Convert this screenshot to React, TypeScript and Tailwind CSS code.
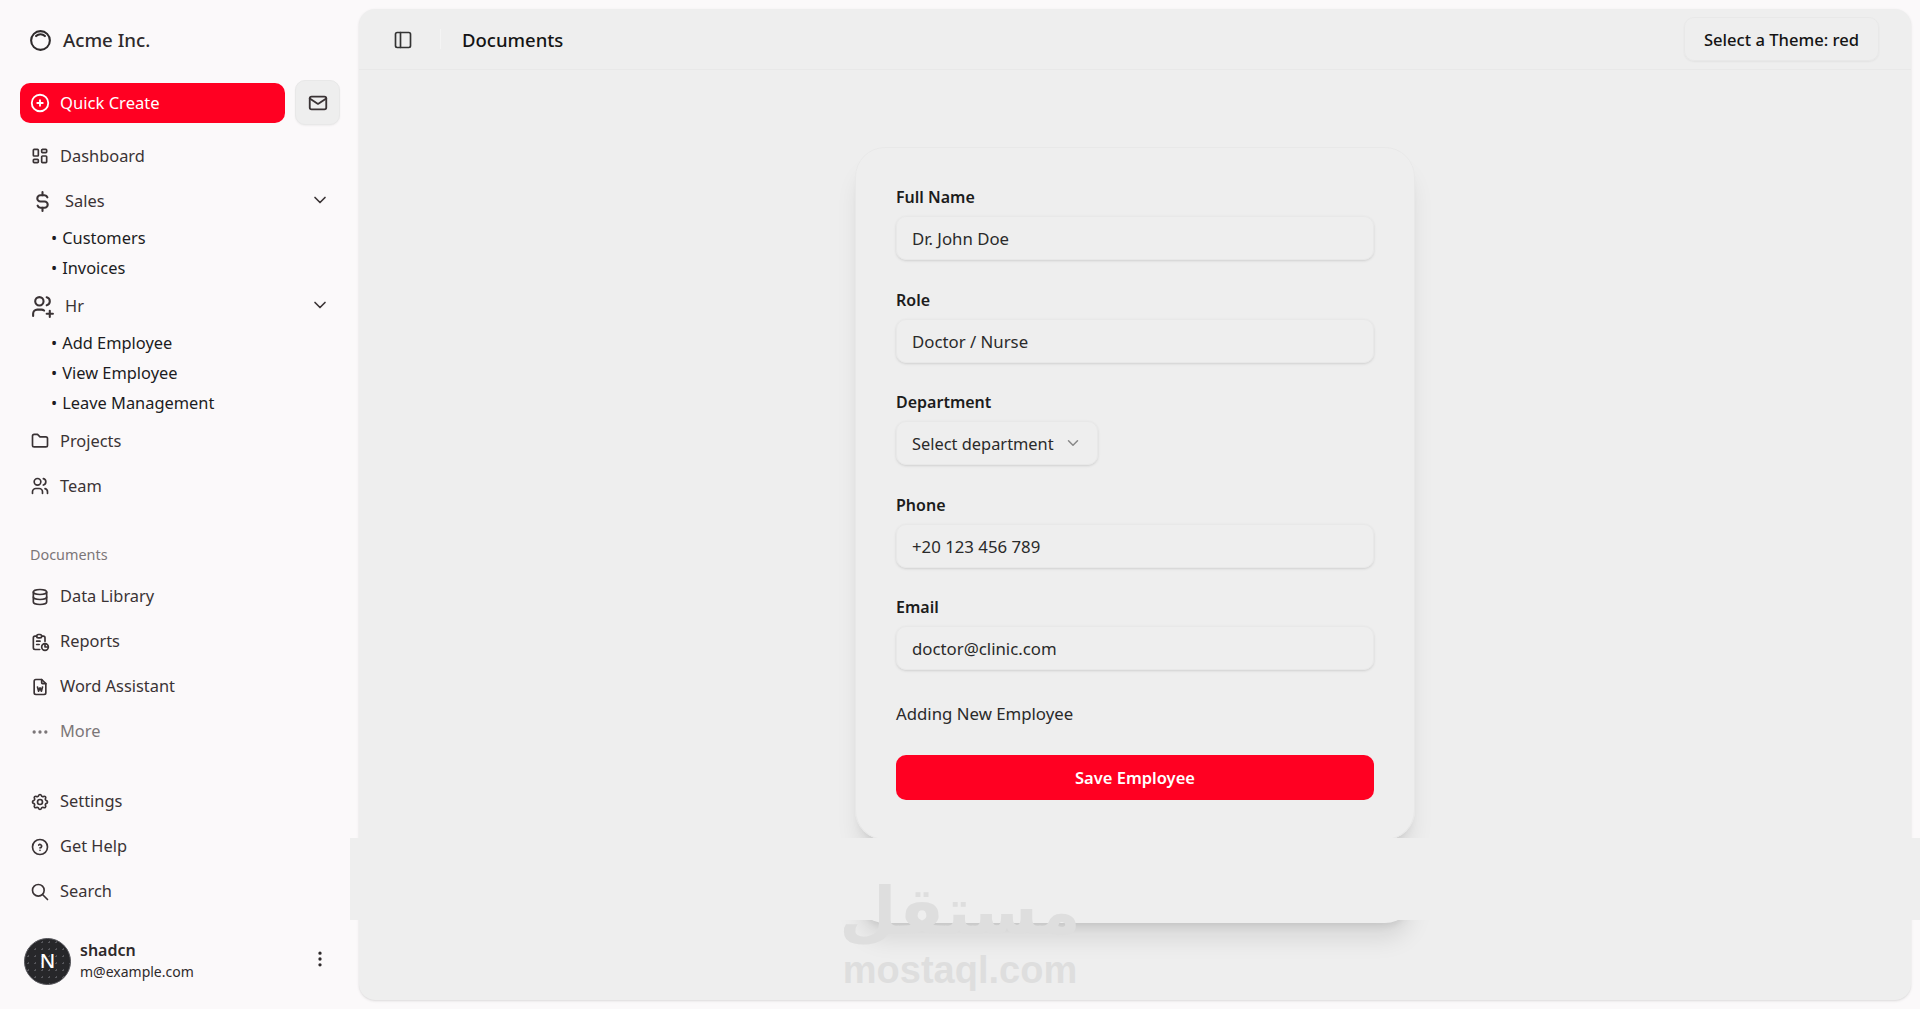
import { PanelLeft } from "lucide-react";
import {
  TbChevronDown,
  TbCirclePlus,
  TbCurrencyDollar,
  TbDatabase,
  TbDots,
  TbDotsVertical,
  TbFileWord,
  TbFolder,
  TbHelpCircle,
  TbInnerShadowTop,
  TbLayoutDashboard,
  TbMail,
  TbReport,
  TbSearch,
  TbSettings,
  TbUsers,
  TbUsersPlus,
} from "react-icons/tb";
import type { ReactNode } from "react";

function NavItem({ icon, label, muted }: { icon: ReactNode; label: string; muted?: boolean }) {
  return (
    <div className={`flex h-[45px] items-center gap-[10px] pl-[30px] text-[16.4px] ${muted ? "text-[#7b7678]" : "text-[#3a3335]"}`}>
      {icon}
      <span>{label}</span>
    </div>
  );
}

function NavGroup({ icon, label, items }: { icon: ReactNode; label: string; items: string[] }) {
  return (
    <div>
      <div className="flex h-[45px] items-center pr-[29px] pl-[30px] text-[16.4px] text-[#3a3335]">
        {icon}
        <span className="ml-[10px] flex-1">{label}</span>
        <TbChevronDown size={20} className="-mt-[3px]" />
      </div>
      <ul className="pl-[51px] text-[16.4px] text-[#1c1c22]">
        {items.map((item) => (
          <li key={item} className="flex h-[30px] items-center">
            <span>•</span>
            <span className="ml-[5px]">{item}</span>
          </li>
        ))}
      </ul>
    </div>
  );
}

function Field({ label, value }: { label: string; value: string }) {
  return (
    <div>
      <div className="text-[16px] leading-[24px] font-semibold text-[#1c1c1c]">{label}</div>
      <div className="mt-[7px] flex h-[44px] items-center rounded-[10px] border border-[#e8e8e8] px-[15px] pt-[2px] text-[16.8px] text-[#2a2a2a] shadow-sm">
        {value}
      </div>
    </div>
  );
}

export default function App() {
  return (
    <div className="relative flex h-[1009px] w-[1920px] overflow-hidden bg-[#fbf9fa] font-['Noto_Sans',sans-serif]">
      <aside className="flex w-[359px] shrink-0 flex-col">
        <div className="flex h-[80px] items-center gap-[10px] pl-[28px] text-[18.7px] font-medium text-[#2e2a2b]">
          <TbInnerShadowTop size={25} />
          Acme Inc.
        </div>
        <div className="flex items-center gap-[10px] pl-[20px]">
          <button className="flex h-[40px] w-[265px] items-center gap-[9px] rounded-[10px] bg-[#ff0022] pl-[9px] text-[16.6px] text-white">
            <TbCirclePlus size={22} />
            <span className="pt-[2px]">Quick Create</span>
          </button>
          <button className="flex h-[45px] w-[45px] items-center justify-center rounded-[10px] border border-[#e8e8e8] bg-[#eeeeee] text-[#3a3335] shadow-xs">
            <TbMail size={22} />
          </button>
        </div>
        <div className="mt-[8.5px]">
          <NavItem icon={<TbLayoutDashboard size={20} />} label="Dashboard" />
          <NavGroup icon={<TbCurrencyDollar size={25} />} label="Sales" items={["Customers", "Invoices"]} />
          <NavGroup icon={<TbUsersPlus size={25} />} label="Hr" items={["Add Employee", "View Employee", "Leave Management"]} />
          <NavItem icon={<TbFolder size={20} />} label="Projects" />
          <NavItem icon={<TbUsers size={20} />} label="Team" />
        </div>
        <div className="mt-[36.5px] pl-[30px] text-[14.4px] leading-[20px] text-[#7b7678]">Documents</div>
        <div className="mt-[9px]">
          <NavItem icon={<TbDatabase size={20} />} label="Data Library" />
          <NavItem icon={<TbReport size={20} />} label="Reports" />
          <NavItem icon={<TbFileWord size={20} />} label="Word Assistant" />
          <NavItem icon={<TbDots size={20} />} label="More" muted />
        </div>
        <div className="mt-[25px]">
          <NavItem icon={<TbSettings size={20} />} label="Settings" />
          <NavItem icon={<TbHelpCircle size={20} />} label="Get Help" />
          <NavItem icon={<TbSearch size={20} />} label="Search" />
        </div>
        <div className="mt-[23.5px] flex items-center pr-[29px] pl-[24px]">
          <div className="flex h-[47px] w-[47px] items-center justify-center rounded-full border border-[#55555a] bg-[#27272a] bg-[radial-gradient(#55555a_1px,transparent_1px)] bg-[length:7px_7px] text-[20px] font-medium text-white">
            N
          </div>
          <div className="ml-[9px] flex-1">
            <div className="text-[16px] leading-[21px] font-semibold text-[#2e2a2b]">shadcn</div>
            <div className="text-[14px] leading-[21px] text-[#2e2a2b]">m@example.com</div>
          </div>
          <TbDotsVertical size={20} className="-mt-[4px] text-[#2e2a2b]" />
        </div>
      </aside>

      <main className="mt-[9px] mb-[9px] flex w-[1552px] flex-col overflow-hidden rounded-[16px] bg-[#eeeeee] shadow-sm">
        <header className="flex h-[61px] shrink-0 items-center justify-between border-b border-[#e8e8e8] pr-[32px] pl-[34px]">
          <div className="flex items-center">
            <PanelLeft size={20} className="mt-[1px] text-[#333]" />
            <div className="ml-[27px] h-[20px] w-px bg-[#f4f4f4]" />
            <span className="ml-[21px] pt-[1px] text-[18.5px] font-medium text-[#141414]">Documents</span>
          </div>
          <button className="flex h-[44px] w-[195px] items-center justify-center rounded-[10px] border border-[#e8e8e8] pt-[2px] text-[16.6px] font-medium text-[#141414] shadow-xs">
            Select a Theme: red
          </button>
        </header>
        <div className="flex justify-center pt-[77px]">
          <form className="h-[693px] w-[560px] rounded-[30px] border border-[#e8e8e8] px-[40px] pt-[37px] shadow-xl">
            <div className="flex flex-col gap-[27.5px]">
              <Field label="Full Name" value="Dr. John Doe" />
              <Field label="Role" value="Doctor / Nurse" />
              <div>
                <div className="text-[16px] leading-[24px] font-semibold text-[#1c1c1c]">Department</div>
                <div className="mt-[7px] flex h-[44px] w-[202px] items-center justify-between rounded-[10px] border border-[#e8e8e8] px-[15px] pt-[2px] text-[16.4px] text-[#2a2a2a] shadow-sm">
                  Select department
                  <TbChevronDown size={18} className="-mt-[2px] text-[#888]" />
                </div>
              </div>
              <Field label="Phone" value="+20 123 456 789" />
              <Field label="Email" value="doctor@clinic.com" />
            </div>
            <p className="mt-[32px] text-[16.8px] leading-[24px] text-[#2a2a2a]">Adding New Employee</p>
            <button type="button" className="mt-[29px] h-[45px] w-full rounded-[10px] bg-[#ff0022] pt-[2px] text-[16.5px] font-semibold text-white">
              Save Employee
            </button>
          </form>
        </div>
      </main>

      {/* bottom edge of the card, left over below the strip */}
      <div className="absolute top-[860px] left-[855px] h-[63px] w-[560px] rounded-b-[30px] bg-[#eeeeee] shadow-xl" />
      {/* strip laid over the card */}
      <div className="absolute top-[838px] left-[350px] h-[82px] w-[1570px] bg-[#eeeeee]" />
      {/* watermark */}
      <div className="absolute top-[874px] left-[840px] flex w-[240px] flex-col items-center font-['DejaVu_Sans',sans-serif] font-bold text-[#dedede]">
        <div className="text-[66px] leading-[76px]" dir="rtl">مستقل</div>
        <div className="font-['Liberation_Sans',sans-serif] text-[38px] leading-[40px]">mostaql.com</div>
      </div>
    </div>
  );
}
